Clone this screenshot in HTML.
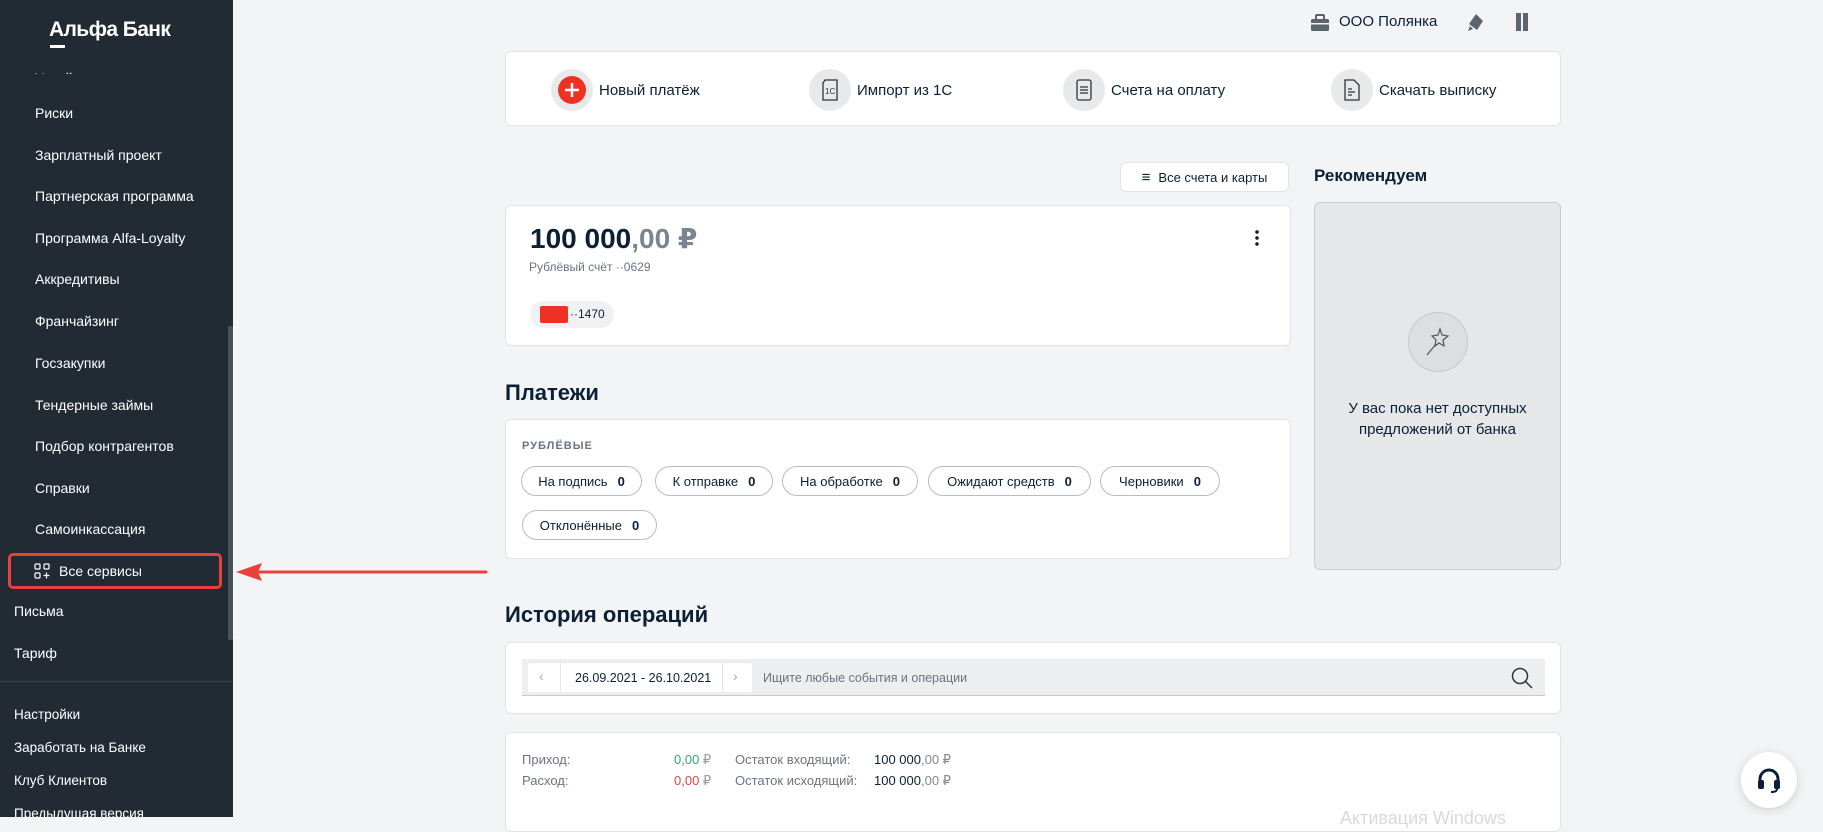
<!DOCTYPE html>
<html><head><meta charset="utf-8">
<style>
*{box-sizing:border-box;margin:0;padding:0}
body{width:1823px;height:817px;overflow:hidden;background:#f3f4f6;font-family:"Liberation Sans","DejaVu Sans",sans-serif;color:#0b1f35;position:relative}
.abs{position:absolute}
#side{left:0;top:0;width:233px;height:817px;background:#222a33;color:#fff}
.mi{position:absolute;left:35px;font-size:14px;color:#fff;line-height:18px}
.card{position:absolute;background:#fff;border:1px solid #e1e3e6;border-radius:6px}
.qa{position:absolute;top:69px;display:flex;align-items:center;font-size:15px;color:#0b1f35}
.qa .c{width:42px;height:42px;border-radius:50%;background:#e8e9eb;display:flex;align-items:center;justify-content:center;margin-right:6px}
.pill{position:absolute;height:30px;border:1px solid #b8bcc2;border-radius:15px;font-size:13px;display:flex;align-items:center;justify-content:center;background:#fff}
.pill b{margin-left:10px}
h2{position:absolute;font-size:22px;font-weight:bold;color:#0b1f35}
.sm{font-size:13px;color:#6b7480}
</style></head><body>
<div id="side" class="abs">
  <div class="abs" style="left:49px;top:18px;font-size:21px;font-weight:bold;letter-spacing:-0.6px">Альфа Банк</div>
  <div class="abs" style="left:50px;top:45px;width:15px;height:3px;background:#fff"></div>
  <div class="abs" style="left:35px;top:70px;width:120px;height:4px;overflow:hidden;font-size:14px">Узнайте про</div>
  <div class="mi" style="top:104px">Риски</div>
  <div class="mi" style="top:146px">Зарплатный проект</div>
  <div class="mi" style="top:187px">Партнерская программа</div>
  <div class="mi" style="top:229px">Программа Alfa-Loyalty</div>
  <div class="mi" style="top:270px">Аккредитивы</div>
  <div class="mi" style="top:312px">Франчайзинг</div>
  <div class="mi" style="top:354px">Госзакупки</div>
  <div class="mi" style="top:396px">Тендерные займы</div>
  <div class="mi" style="top:437px">Подбор контрагентов</div>
  <div class="mi" style="top:479px">Справки</div>
  <div class="mi" style="top:520px">Самоинкассация</div>
  <div class="abs" style="left:8px;top:553px;width:214px;height:36px;border:3px solid #e8403b;border-radius:5px"></div>
  <svg class="abs" style="left:34px;top:563px" width="16" height="16" viewBox="0 0 16 16" fill="none" stroke="#fff" stroke-width="1.2"><rect x="1" y="1" width="5" height="5" rx="1"/><rect x="10" y="1" width="5" height="5" rx="1"/><rect x="1" y="10" width="5" height="5" rx="1"/><path d="M12.5 9.5v6M9.5 12.5h6"/></svg>
  <div class="mi" style="left:59px;top:562px">Все сервисы</div>
  <div class="mi" style="left:14px;top:602px">Письма</div>
  <div class="mi" style="left:14px;top:644px">Тариф</div>
  <div class="abs" style="left:0;top:681px;width:233px;height:1px;background:#3a434d"></div>
  <div class="mi" style="left:14px;top:706px;font-size:13.5px">Настройки</div>
  <div class="mi" style="left:14px;top:739px;font-size:13.5px">Заработать на Банке</div>
  <div class="mi" style="left:14px;top:772px;font-size:13.5px">Клуб Клиентов</div>
  <div class="mi" style="left:14px;top:805px;font-size:13.5px">Предыдущая версия</div>
  <div class="abs" style="left:228px;top:326px;width:5px;height:314px;background:#4a525b;border-radius:2px"></div>
</div>
<svg class="abs" style="left:234px;top:562px" width="256" height="20"><path d="M252 10H20" stroke="#e8403b" stroke-width="3" stroke-linecap="round"/><path d="M2 10L28 1 24 10 28 19Z" fill="#e8403b"/></svg>

<svg class="abs" style="left:1310px;top:14px" width="20" height="18" viewBox="0 0 20 18"><rect x="1" y="5" width="18" height="12" rx="1.5" fill="#5c646e"/><rect x="6" y="1" width="8" height="5" rx="1" fill="none" stroke="#5c646e" stroke-width="2"/><rect x="1" y="9" width="18" height="1.5" fill="#f3f4f6"/></svg>
<div class="abs" style="left:1339px;top:13px;font-size:15px">ООО Полянка</div>
<svg class="abs" style="left:1466px;top:12px" width="20" height="22" viewBox="0 0 20 22"><path d="M10 2l7 7-6 9-8-6z" fill="#5c646e"/><path d="M4 14l-2 5 5-2" fill="#5c646e"/></svg>
<svg class="abs" style="left:1514px;top:11px" width="16" height="22" viewBox="0 0 16 22"><rect x="2" y="2" width="12" height="18" fill="#5c646e"/><rect x="7" y="2" width="2" height="18" fill="#f3f4f6"/></svg>

<div class="card" style="left:505px;top:51px;width:1056px;height:75px"></div>
<div class="qa" style="left:551px"><div class="c"><svg width="30" height="30"><circle cx="15" cy="15" r="14" fill="#ef3124"/><path d="M15 8v14M8 15h14" stroke="#fff" stroke-width="2.5"/></svg></div>Новый платёж</div>
<div class="qa" style="left:809px"><div class="c"><svg width="20" height="24" viewBox="0 0 20 24" fill="none" stroke="#333" stroke-width="1.3"><path d="M5 2h12v20H3V5z"/><text x="5" y="16" font-size="8" fill="#333" stroke="none" font-family="Liberation Sans">1C</text></svg></div>Импорт из 1С</div>
<div class="qa" style="left:1063px"><div class="c"><svg width="18" height="24" viewBox="0 0 18 24" fill="none" stroke="#333" stroke-width="1.3"><rect x="2" y="2" width="14" height="20" rx="2"/><path d="M5 9h8M5 12h8M5 15h8"/></svg></div>Счета на оплату</div>
<div class="qa" style="left:1331px"><div class="c"><svg width="18" height="24" viewBox="0 0 18 24" fill="none" stroke="#333" stroke-width="1.3"><path d="M2 2h9l5 5v15H2z"/><path d="M5 11h4M5 14h7M5 17h4"/></svg></div>Скачать выписку</div>

<div class="card" style="left:1120px;top:162px;width:169px;height:30px;display:flex;align-items:center;justify-content:center;font-size:13px"><span style="font-size:15px;margin-right:8px">≡</span>Все счета и карты</div>
<div class="abs" style="left:1314px;top:166px;font-size:17px;font-weight:bold">Рекомендуем</div>
<div class="card" style="left:505px;top:205px;width:786px;height:141px"></div>
<div class="abs" style="left:530px;top:222px;font-size:28px;font-weight:bold">100 000<span style="color:#7b8591">,00 ₽</span></div>
<div class="abs sm" style="left:529px;top:260px;font-size:12px">Рублёвый счёт ··0629</div>
<div class="abs" style="left:530px;top:301px;width:84px;height:27px;border-radius:14px;background:#f0f1f3"></div>
<div class="abs" style="left:540px;top:306px;width:28px;height:17px;background:#ef3124;border-radius:2px"></div>
<div class="abs" style="left:570px;top:307px;font-size:12px">··1470</div>
<div class="abs" style="left:1255px;top:229px;width:4px;height:18px;background:radial-gradient(circle,#0b1f35 1.6px,transparent 2px) 0 0/4px 6px"></div>
<div class="abs" style="left:1314px;top:202px;width:247px;height:368px;background:#e6e7e9;border:1px solid #c9ccd0;border-radius:6px"></div>
<div class="abs" style="left:1408px;top:312px;width:60px;height:60px;border-radius:50%;background:#dcdee1;border:1px solid #c6c9cd"></div>
<svg class="abs" style="left:1424px;top:327px" width="28" height="30" viewBox="0 0 28 30" fill="none" stroke="#555" stroke-width="1.2"><path d="M16 2l2 6 6 1-5 4 1 6-5-3-4 3 1-6-4-4 6-1z"/><path d="M12 17L3 28"/></svg>
<div class="abs" style="left:1314px;top:398px;width:247px;text-align:center;font-size:15px;line-height:21px">У вас пока нет доступных<br>предложений от банка</div>

<h2 style="left:505px;top:380px">Платежи</h2>
<div class="card" style="left:505px;top:419px;width:786px;height:140px"></div>
<div class="abs" style="left:522px;top:440px;font-size:11px;font-weight:bold;color:#6b7480;letter-spacing:1px">РУБЛЁВЫЕ</div>
<div class="pill" style="left:521px;top:466px;width:121px">На подпись<b>0</b></div>
<div class="pill" style="left:655px;top:466px;width:118px">К отправке<b>0</b></div>
<div class="pill" style="left:782px;top:466px;width:136px">На обработке<b>0</b></div>
<div class="pill" style="left:928px;top:466px;width:163px">Ожидают средств<b>0</b></div>
<div class="pill" style="left:1100px;top:466px;width:120px">Черновики<b>0</b></div>
<div class="pill" style="left:522px;top:510px;width:135px">Отклонённые<b>0</b></div>

<h2 style="left:505px;top:602px">История операций</h2>
<div class="card" style="left:505px;top:642px;width:1056px;height:72px"></div>
<div class="abs" style="left:522px;top:659px;width:1023px;height:37px;background:#eceef0;border-bottom:1px solid #c6c9cd"></div>
<div class="abs" style="left:528px;top:663px;width:224px;height:29px;background:#fff;border-radius:3px"></div>
<div class="abs" style="left:560px;top:663px;width:1px;height:29px;background:#e5e6e8"></div>
<div class="abs" style="left:722px;top:663px;width:1px;height:29px;background:#e5e6e8"></div>
<div class="abs" style="left:539px;top:668px;color:#aaa;font-size:14px">‹</div>
<div class="abs" style="left:733px;top:668px;color:#aaa;font-size:14px">›</div>
<div class="abs" style="left:575px;top:671px;font-size:12.5px">26.09.2021 - 26.10.2021</div>
<div class="abs" style="left:763px;top:671px;font-size:12.5px;color:#6b7480">Ищите любые события и операции</div>
<svg class="abs" style="left:1510px;top:666px" width="24" height="24" viewBox="0 0 24 24" fill="none" stroke="#333" stroke-width="1.5"><circle cx="10" cy="10" r="7.5"/><path d="M15.5 15.5L22 22"/></svg>
<div class="card" style="left:505px;top:732px;width:1056px;height:100px"></div>
<div class="abs sm" style="left:522px;top:752px">Приход:</div>
<div class="abs sm" style="left:522px;top:773px">Расход:</div>
<div class="abs" style="left:674px;top:752px;font-size:13px;color:#2eab6c">0,00 <span style="color:#999">₽</span></div>
<div class="abs" style="left:674px;top:773px;font-size:13px;color:#e0463c">0,00 <span style="color:#999">₽</span></div>
<div class="abs sm" style="left:735px;top:752px">Остаток входящий:</div>
<div class="abs sm" style="left:735px;top:773px">Остаток исходящий:</div>
<div class="abs" style="left:874px;top:752px;font-size:13px">100 000<span style="color:#888">,00 ₽</span></div>
<div class="abs" style="left:874px;top:773px;font-size:13px">100 000<span style="color:#888">,00 ₽</span></div>
<div class="abs" style="left:1340px;top:808px;font-size:18px;color:#d8d9db">Активация Windows</div>

<div class="abs" style="left:1741px;top:752px;width:56px;height:56px;border-radius:50%;background:#fff;box-shadow:0 2px 10px rgba(0,0,0,.15)"></div>
<svg class="abs" style="left:1756px;top:766px" width="26" height="28" viewBox="0 0 26 28"><path d="M4 16v-3a9 9 0 0118 0v3" fill="none" stroke="#0b1f35" stroke-width="3"/><rect x="2" y="14" width="6" height="9" rx="2" fill="#0b1f35"/><rect x="18" y="14" width="6" height="9" rx="2" fill="#0b1f35"/><path d="M21 23q0 3-6 3" fill="none" stroke="#0b1f35" stroke-width="2"/></svg>
</body></html>
